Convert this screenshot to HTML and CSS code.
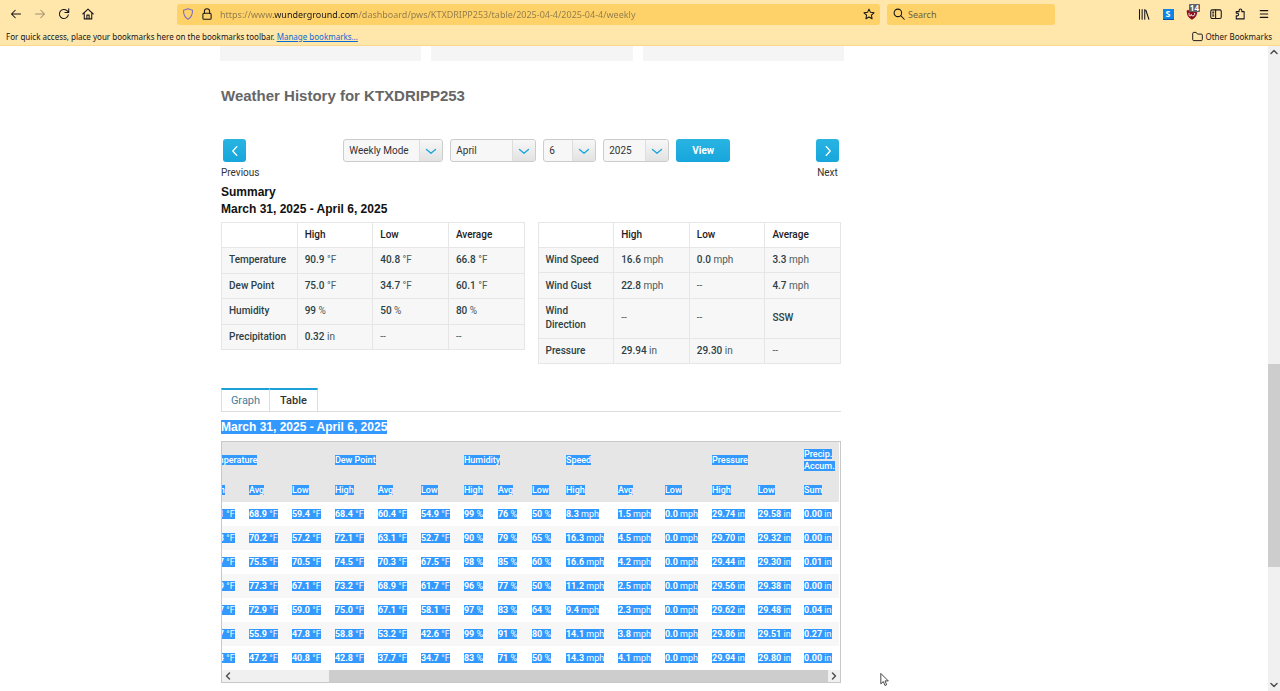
FILE: index.html
```html
<!DOCTYPE html>
<html lang="en">
<head>
    <meta charset="UTF-8">
    <meta name="viewport" content="width=device-width, initial-scale=1.0">
    <title>Weather History for KTXDRIPP253</title>
    <link rel="stylesheet" href="styles.css">
</head>
<body>

    <header class="chrome">
        <div class="toolbar">
            <button class="tool" aria-label="Back"><svg class="icon" viewBox="0 0 16 16"><path d="M14 8H2M7 3L2 8l5 5"/></svg></button>
            <button class="tool faded" aria-label="Forward"><svg class="icon" viewBox="0 0 16 16"><path d="M2 8h12M9 3l5 5-5 5"/></svg></button>
            <button class="tool" aria-label="Reload"><svg class="icon" viewBox="0 0 16 16"><path d="M13.800 9A6 6 0 1 1 12 3.600L14 5.500M14.300 1v5h-5"/></svg></button>
            <button class="tool" aria-label="Home"><svg class="icon" viewBox="0 0 16 16"><path d="M1 8l7-6.500L15 8M3 7v7.500h10V7M6.500 14v-4.500h3V14"/></svg></button>
            <span class="spacer"></span>
            <div class="field url">
                <svg class="icon shield" viewBox="0 0 16 16"><path d="M8 1l6 2c.2 6-1.500 9.500-6 12C3.500 12.500 1.800 9 2 3z"/></svg>
                <svg class="icon lock" viewBox="0 0 16 16"><rect x="2.500" y="7" width="11" height="8" rx="1.500"/><path d="M4.500 7V4.500a3.500 3.500 0 0 1 7 0V7"/></svg>
                <input class="url-input" type="text" aria-label="Address" value="https://www.wunderground.com/dashboard/pws/KTXDRIPP253/table/2025-04-4/2025-04-4/weekly">
                <svg class="icon" viewBox="0 0 16 16"><path d="M8 1.500l2 4.300 4.700.6-3.500 3.200.9 4.700L8 12l-4.100 2.300.9-4.700L1.300 6.400 6 5.800z"/></svg>
            </div>
            <div class="field search">
                <svg class="icon" viewBox="0 0 16 16"><circle cx="6.500" cy="6.500" r="5"/><path d="M10.300 10.300L15 15"/></svg>
                <input class="search-input" type="text" aria-label="Search" placeholder="Search">
            </div>
            <span class="spacer"></span>
            <button class="tool" aria-label="Library"><svg class="icon" viewBox="0 0 16 16"><path d="M2 2v13M5.500 2v13M9 2v13M10.500 3l4 12"/></svg></button>
            <button class="tool" aria-label="Extension"><span class="ext-s">S</span></button>
            <button class="tool" aria-label="Blocker"><svg class="ublock" viewBox="0 0 16 16"><path d="M8 1c2 1.300 4.500 2 7 2 0 6-1 9-7 12.500C2 12 1 9 1 3c2.500 0 5-.7 7-2z"/><path class="ublock-mark" d="M4 7v2q0 1.500 1.500 1.500T7 9M7 9q0 1.500 2 1.500T11.500 9V7"/></svg><span class="badge">14</span></button>
            <button class="tool" aria-label="Sidebars"><svg class="icon" viewBox="0 0 16 16"><rect x="1" y="2.500" width="14" height="11.500" rx="2"/><path d="M7.500 2.500V14M3.500 5.500h1.500M3.500 8h1.500M3.500 10.500h1.500"/></svg></button>
            <button class="tool" aria-label="Extensions"><svg class="icon" viewBox="0 0 16 16"><path d="M3 14.500V10.500h1.500a1.700 1.700 0 0 0 0-3.400H3V4.800h3.800V3a1.800 1.800 0 0 1 3.600 0v1.800H13.500v9.700z"/></svg></button>
            <button class="tool" aria-label="Menu"><svg class="icon" viewBox="0 0 16 16"><path d="M3 3.500h10M3 8h10M3 12.500h10"/></svg></button>
        </div>
        <div class="bookmarks">
            <span>For quick access, place your bookmarks here on the bookmarks toolbar. <a class="manage" href="#">Manage bookmarks…</a></span>
            <button class="other"><svg class="folder" viewBox="0 0 16 16"><path d="M1 3.500q0-1.500 1.500-1.500H6l2 2.500h5.500q1.500 0 1.500 1.500v6.500q0 1.500-1.500 1.500h-11Q1 14 1 12.500z"/></svg>Other Bookmarks</button>
        </div>
    </header>

    <div class="viewport">
        <main class="page">
            <div class="content">
                <div class="cards">
                    <div class="card"></div>
                    <div class="card"></div>
                    <div class="card"></div>
                </div>

                <div class="history">
                    <h2>Weather History for KTXDRIPP253</h2>

                    <div class="date-nav">
                        <div class="step">
                            <button class="arrow" aria-label="Previous week"><svg viewBox="0 0 16 16"><path d="M10 3L5.500 8l4.500 5"/></svg></button>
                            <span>Previous</span>
                        </div>
                        <form class="date-form">
                            <div class="pick mode">
                                <select aria-label="Mode"><option>Weekly Mode</option></select>
                                <span class="pick-arrow"><svg viewBox="0 0 16 16"><path d="M2 6l6 5 6-5"/></svg></span>
                            </div>
                            <div class="pick month">
                                <select aria-label="Month"><option>April</option></select>
                                <span class="pick-arrow"><svg viewBox="0 0 16 16"><path d="M2 6l6 5 6-5"/></svg></span>
                            </div>
                            <div class="pick day">
                                <select aria-label="Day"><option>6</option></select>
                                <span class="pick-arrow"><svg viewBox="0 0 16 16"><path d="M2 6l6 5 6-5"/></svg></span>
                            </div>
                            <div class="pick year">
                                <select aria-label="Year"><option>2025</option></select>
                                <span class="pick-arrow"><svg viewBox="0 0 16 16"><path d="M2 6l6 5 6-5"/></svg></span>
                            </div>
                            <button class="view" type="button">View</button>
                        </form>
                        <div class="step next">
                            <button class="arrow" aria-label="Next week"><svg viewBox="0 0 16 16"><path d="M6 3l4.500 5L6 13"/></svg></button>
                            <span>Next</span>
                        </div>
                    </div>

                    <h3>Summary</h3>
                    <h3>March 31, 2025 - April 6, 2025</h3>

                    <div class="summary">
                        <table class="summary-table">
                            <thead>
                                <tr><th></th><th>High</th><th>Low</th><th>Average</th></tr>
                            </thead>
                            <tbody>
                                <tr><th>Temperature</th><td><b>90.9</b> °F</td><td><b>40.8</b> °F</td><td><b>66.8</b> °F</td></tr>
                                <tr><th>Dew Point</th><td><b>75.0</b> °F</td><td><b>34.7</b> °F</td><td><b>60.1</b> °F</td></tr>
                                <tr><th>Humidity</th><td><b>99</b> %</td><td><b>50</b> %</td><td><b>80</b> %</td></tr>
                                <tr><th>Precipitation</th><td><b>0.32</b> in</td><td>--</td><td>--</td></tr>
                            </tbody>
                        </table>
                        <table class="summary-table wind">
                            <thead>
                                <tr><th></th><th>High</th><th>Low</th><th>Average</th></tr>
                            </thead>
                            <tbody>
                                <tr><th>Wind Speed</th><td><b>16.6</b> mph</td><td><b>0.0</b> mph</td><td><b>3.3</b> mph</td></tr>
                                <tr><th>Wind Gust</th><td><b>22.8</b> mph</td><td>--</td><td><b>4.7</b> mph</td></tr>
                                <tr><th>Wind Direction</th><td>--</td><td>--</td><td><b>SSW</b></td></tr>
                                <tr><th>Pressure</th><td><b>29.94</b> in</td><td><b>29.30</b> in</td><td>--</td></tr>
                            </tbody>
                        </table>
                    </div>

                    <div class="tabs">
                        <a class="tab" href="#">Graph</a>
                        <a class="tab active" href="#">Table</a>
                    </div>

                    <h3 class="table-title"><span class="sel">March 31, 2025 - April 6, 2025</span></h3>

                    <div class="scroll-box">
                        <div class="scroll-area">
                            <table class="history-table">
                                <colgroup>
                                    <col class="c-date">
                                    <col class="c-temp" span="6">
                                    <col class="c-hum" span="3">
                                    <col class="c-gust">
                                    <col class="c-speed" span="2">
                                    <col class="c-pressure" span="2">
                                    <col class="c-sum">
                                </colgroup>
                                <thead>
                                    <tr class="groups">
                                        <th></th>
                                        <th colspan="3"><span class="sel">Temperature</span></th>
                                        <th colspan="3"><span class="sel">Dew Point</span></th>
                                        <th colspan="3"><span class="sel">Humidity</span></th>
                                        <th colspan="3"><span class="sel">Speed</span></th>
                                        <th colspan="2"><span class="sel">Pressure</span></th>
                                        <th><span class="sel">Precip. Accum.</span></th>
                                    </tr>
                                    <tr>
                                        <th><span class="sel">Date</span></th>
                                        <th><span class="sel">High</span></th>
                                        <th><span class="sel">Avg</span></th>
                                        <th><span class="sel">Low</span></th>
                                        <th><span class="sel">High</span></th>
                                        <th><span class="sel">Avg</span></th>
                                        <th><span class="sel">Low</span></th>
                                        <th><span class="sel">High</span></th>
                                        <th><span class="sel">Avg</span></th>
                                        <th><span class="sel">Low</span></th>
                                        <th><span class="sel">High</span></th>
                                        <th><span class="sel">Avg</span></th>
                                        <th><span class="sel">Low</span></th>
                                        <th><span class="sel">High</span></th>
                                        <th><span class="sel">Low</span></th>
                                        <th><span class="sel">Sum</span></th>
                                    </tr>
                                </thead>
                                <tbody id="historyRows"></tbody>
                            </table>
                        </div>
                        <div class="hbar">
                            <svg class="bar-end" viewBox="0 0 12 12"><path d="M7.500 3L4.500 6l3 3"/></svg>
                            <div class="htrack"><div class="hthumb"></div></div>
                            <svg class="bar-end" viewBox="0 0 12 12"><path d="M4.500 3l3 3-3 3"/></svg>
                        </div>
                    </div>
                </div>
            </div>
        </main>

        <div class="vbar">
            <svg class="bar-end" viewBox="0 0 12 12"><path d="M3 7.500l3-3 3 3"/></svg>
            <div class="vtrack"><div class="vthumb"></div></div>
            <svg class="bar-end" viewBox="0 0 12 12"><path d="M3 4.500l3 3 3-3"/></svg>
        </div>
    </div>

    <svg class="cursor" viewBox="0 0 12 18"><path d="M1 1v12l3-2.700 2 4.700 2-1-2-4.500h3.500z"/></svg>

    <script src="script.js"></script>
</body>
</html>
```
FILE: styles.css
```css
* {
    box-sizing: border-box;
}
body {
    margin: 0;
    height: 100vh;
    display: flex;
    flex-direction: column;
    overflow: hidden;
    background-color: #fff;
    font-family: Roboto, Arial, sans-serif;
    font-size: 10px;
    color: #333;
}
button, input, select {
    font: inherit;
    color: inherit;
    margin: 0;
    padding: 0;
    border: none;
    background: none;
}
svg {
    flex: none;
    fill: none;
    stroke: currentColor;
    stroke-linecap: round;
    stroke-linejoin: round;
}

/* browser chrome */
.chrome {
    background-color: #ffe6ab;
    border-bottom: 1px solid #fbd88b;
    font-family: "Noto Sans", sans-serif;
    font-size: 8px;
    color: #15141a;
}
.toolbar {
    display: flex;
    align-items: center;
    height: 28px;
    padding: 0 4px;
}
.tool {
    position: relative;
    display: flex;
    justify-content: center;
    align-items: center;
    width: 24px;
    height: 24px;
}
.icon {
    width: 12px;
    height: 12px;
    stroke-width: 1.4;
}
.faded {
    opacity: 0.4;
}
.spacer {
    flex: 1 1 0;
}
.field {
    display: flex;
    align-items: center;
    height: 21px;
    background-color: #ffd269;
    border-radius: 3px;
    font-size: 9px;
}
.url {
    flex: 9 1 0;
    padding: 0 5px;
    gap: 7px;
}
.shield {
    stroke: #7a6fc4;
}
.url-input {
    flex: 1;
    color: transparent;
    background: linear-gradient(to right, #8d7a4c 53px, #15141a 53px, #15141a 137px, #8d7a4c 137px);
    background-clip: text;
    -webkit-background-clip: text;
}
.search {
    width: 168px;
    margin-left: 7px;
    padding: 0 6px;
    gap: 3px;
}
.search-input {
    flex: 1;
    min-width: 0;
}
.search-input::placeholder {
    color: #6d5f3d;
    opacity: 1;
}
.ext-s {
    width: 11px;
    height: 11px;
    background-color: #0a84e8;
    border-bottom: 1px solid #0c4f9c;
    color: #fff;
    font-size: 9px;
    font-weight: bold;
    line-height: 10px;
    text-align: center;
}
.ublock {
    width: 12px;
    height: 12px;
    fill: #8b0f1c;
    stroke: none;
}
.ublock-mark {
    fill: none;
    stroke: #fff;
    stroke-width: 1.2;
}
.badge {
    position: absolute;
    top: 2px;
    right: 4px;
    padding: 0 1px;
    background-color: #5f6066;
    border-radius: 1px;
    color: #fff;
    font-size: 8px;
    font-weight: bold;
    line-height: 8px;
}
.bookmarks {
    display: flex;
    justify-content: space-between;
    align-items: center;
    height: 17px;
    padding: 0 8px 0 6px;
}
.manage {
    color: #0a6cd6;
}
.other {
    display: flex;
    align-items: center;
    gap: 2px;
}
.folder {
    width: 11px;
    height: 11px;
    stroke-width: 1.4;
}

/* page */
.viewport {
    flex: 1;
    min-height: 0;
    display: flex;
}
.page {
    flex: 1;
    overflow: hidden;
}
.content {
    width: 100%;
    max-width: 828px;
    margin: 0 auto;
    padding-right: 204px;
}
.cards {
    display: grid;
    grid-template-columns: repeat(3, 1fr);
    gap: 10px;
}
.card {
    height: 15px;
    background-color: #f5f5f5;
}
.history {
    padding: 0 3px 0 1px;
}
h2, h3 {
    margin: 0;
    font-family: "Liberation Sans", Arial, sans-serif;
    font-weight: bold;
}
h2 {
    padding: 24px 0 33px;
    font-size: 15px;
    line-height: 21px;
    color: #666;
}
h3 {
    font-size: 12px;
    line-height: 17px;
    color: #111;
}

/* date picker */
.date-nav {
    display: flex;
    justify-content: space-between;
    align-items: flex-start;
    padding-bottom: 4px;
}
.step {
    display: flex;
    flex-direction: column;
    line-height: 14px;
    gap: 4px;
}
.next {
    align-items: center;
}
.arrow {
    display: flex;
    justify-content: center;
    align-items: center;
    width: 23px;
    height: 23px;
    margin: 0 2px;
    border-radius: 3px;
    background: linear-gradient(#29b4e2, #17a6dc);
    color: #fff;
}
.arrow svg {
    width: 14px;
    height: 14px;
    stroke-width: 1.6;
}
.date-form {
    display: flex;
    gap: 7px;
}
.pick {
    position: relative;
    height: 23px;
    border: 1px solid #ccc;
    border-radius: 3px;
    background-color: #f7f7f7;
    overflow: hidden;
}
.pick select {
    width: 100%;
    height: 100%;
    padding-left: 5px;
    appearance: none;
}
.mode {
    width: 100px;
}
.month {
    width: 86px;
}
.day {
    width: 53px;
}
.year {
    width: 66px;
}
.pick-arrow {
    position: absolute;
    top: 0;
    right: 0;
    bottom: 0;
    width: 23px;
    display: flex;
    justify-content: center;
    align-items: center;
    border-left: 1px solid #ddd;
    background: linear-gradient(#f7f7f7, #e2e2e2);
    color: #1ba7dc;
    pointer-events: none;
}
.pick-arrow svg {
    width: 12px;
    height: 12px;
    stroke-width: 1.8;
}
.view {
    width: 54px;
    height: 23px;
    border-radius: 3px;
    background: linear-gradient(#29b4e2, #17a6dc);
    color: #fff;
    font-weight: bold;
}

/* summary tables */
.summary {
    display: grid;
    grid-template-columns: 1fr 1fr;
    align-items: start;
    gap: 13px;
    padding-top: 4px;
}
.summary-table {
    width: 100%;
    height: 128px;
    border-collapse: collapse;
    table-layout: fixed;
    line-height: 14px;
}
.summary-table.wind {
    height: 142px;
}
.summary-table th, .summary-table td {
    padding: 5px 7px;
    border: 1px solid #e6e6e6;
    text-align: left;
    font-weight: normal;
    color: #4b5b5e;
}
.summary-table th, .summary-table b {
    font-weight: 500;
    color: #2b4146;
}
.summary-table thead th {
    color: #1e2023;
}
.summary-table tbody {
    background-color: #f7f7f7;
}

/* tabs */
.tabs {
    display: flex;
    margin-top: 24px;
    border-bottom: 1px solid #ddd;
}
.tab {
    width: 49px;
    border: 1px solid #ddd;
    border-top: 2px solid #1ba0d7;
    border-bottom: none;
    color: #3f7f9f;
    font-size: 11px;
    line-height: 21px;
    text-align: center;
    text-decoration: none;
}
.tab.active {
    margin-left: -1px;
    color: #333;
    font-weight: 500;
}

/* weekly table */
.sel {
    background-color: #3399ff;
    color: #fff;
}
.table-title {
    padding: 7px 0 5px;
}
.scroll-box {
    border: 1px solid #c8c8c8;
}
.scroll-area {
    display: flex;
    justify-content: flex-end;
    overflow: hidden;
    padding-right: 1px;
}
.history-table {
    flex: none;
    width: 729px;
    border-collapse: collapse;
    table-layout: fixed;
    font-size: 9px;
    line-height: 12px;
}
.history-table th, .history-table td {
    height: 24px;
    padding: 0 0 0 7px;
    text-align: left;
    white-space: nowrap;
}
.history-table thead {
    background-color: #e6e6e6;
}
.history-table thead th {
    height: 25px;
    font-weight: 500;
}
.history-table .groups th {
    height: 35px;
    white-space: normal;
}
.history-table b {
    font-weight: bold;
}
.history-table tbody tr:nth-child(even) {
    background-color: #f7f7f7;
}
.c-date {
    width: 89px;
}
.c-temp {
    width: 43px;
}
.c-hum {
    width: 34px;
}
.c-gust {
    width: 52px;
}
.c-speed {
    width: 47px;
}
.c-pressure {
    width: 46px;
}
.c-sum {
    width: 42px;
}

/* scrollbars */
.bar-end {
    width: 12px;
    height: 12px;
    color: #505050;
    stroke-width: 1.5;
}
.hbar {
    display: flex;
    background-color: #f0f0f0;
}
.htrack {
    flex: 1;
    display: flex;
    justify-content: flex-end;
}
.hthumb {
    width: 84%;
    background-color: #cdcdcd;
}
.vbar {
    display: flex;
    flex-direction: column;
    width: 12px;
    background-color: #f0f0f0;
}
.vtrack {
    flex: 1;
    padding-top: 306px;
}
.vthumb {
    height: 203px;
    background-color: #cdcdcd;
}
.cursor {
    position: absolute;
    top: 673px;
    left: 880px;
    width: 10px;
    height: 15px;
    fill: #fff;
    stroke: #222;
}
```
FILE: script.js
```js
// one line per day, grouped as in the table header
const days = [
    ['3/31/2025', 80.1, 68.9, 59.4, 68.4, 60.4, 54.9, 99, 76, 50, 8.3, 1.5, 0, 29.74, 29.58, 0],
    ['4/1/2025', 85.3, 70.2, 57.2, 72.1, 63.1, 52.7, 90, 79, 65, 16.3, 4.5, 0, 29.70, 29.32, 0],
    ['4/2/2025', 83.7, 75.5, 70.5, 74.5, 70.3, 67.5, 98, 85, 60, 16.6, 4.2, 0, 29.44, 29.30, 0.01],
    ['4/3/2025', 90.9, 77.3, 67.1, 73.2, 68.9, 61.7, 96, 77, 50, 11.2, 2.5, 0, 29.56, 29.38, 0],
    ['4/4/2025', 84.7, 72.9, 59.0, 75.0, 67.1, 58.1, 97, 83, 64, 9.4, 2.3, 0, 29.62, 29.48, 0.04],
    ['4/5/2025', 65.7, 55.9, 47.8, 58.8, 53.2, 42.6, 99, 91, 80, 14.1, 3.8, 0, 29.86, 29.51, 0.27],
    ['4/6/2025', 55.4, 47.2, 40.8, 42.8, 37.7, 34.7, 83, 71, 50, 14.3, 4.1, 0, 29.94, 29.80, 0]
];

const units = ['°F', '°F', '°F', '°F', '°F', '°F', '%', '%', '%', 'mph', 'mph', 'mph', 'in', 'in', 'in'];
const decimals = { '°F': 1, '%': 0, 'mph': 1, 'in': 2 };

const rows = document.getElementById('historyRows');

days.forEach(function(day) {
    const tr = document.createElement('tr');
    let html = `<td><span class="sel">${day[0]}</span></td>`;

    units.forEach(function(unit, i) {
        const value = day[i + 1].toFixed(decimals[unit]);
        html += `<td><span class="sel"><b>${value}</b> ${unit}</span></td>`;
    });

    tr.innerHTML = html;
    rows.appendChild(tr);
});
```
